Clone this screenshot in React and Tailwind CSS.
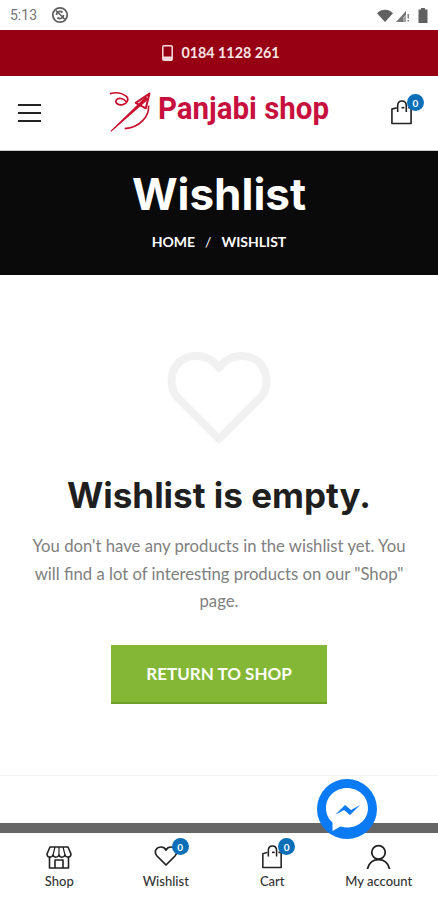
function BagIcon({ className }) {
  return (
    <svg viewBox="0 0 24 26" fill="none" stroke="#222" strokeWidth="1.7" strokeLinejoin="round" className={className}>
      <path d="M7 8.500L2 10v15h20V8.500h-3" />
      <path d="M8 13V6.500C8 3 10 1.500 12.500 1.500S17 3 17 6.500V13" />
      <path d="M12 8.500h3" />
    </svg>
  );
}

function Badge({ className }) {
  return (
    <span className={`absolute flex h-[17px] w-[17px] items-center justify-center rounded-full bg-[#0b6fb8] text-[10px] font-bold leading-none text-white ${className}`}>
      0
    </span>
  );
}

function StatusBar() {
  return (
    <div className="flex h-[30px] items-center justify-between bg-white pl-[10px] pr-[10px]">
      <div className="flex items-center gap-[14px]">
        <span className="font-['Roboto',sans-serif] text-[14px] leading-none text-[#757575]">5:13</span>
        <svg viewBox="0 0 18 18" fill="none" stroke="#616161" className="h-[18px] w-[18px]">
          <circle cx="9" cy="9" r="7.2" strokeWidth="1.8" />
          <path d="M5.500 9a3.500 3.500 0 0 1 6-2.500M12.500 9a3.500 3.500 0 0 1-6 2.500" strokeWidth="1.8" />
          <path d="M5 4.500l9 9" strokeWidth="1.6" />
        </svg>
      </div>
      <div className="flex items-center gap-[3px]">
        <svg viewBox="0 0 16 13" className="h-[13px] w-[16px]">
          <path d="M0 4.200C4.500-.4 11.500-.4 16 4.200L8 13z" fill="#616161" />
        </svg>
        <svg viewBox="0 0 14 14" className="h-[14px] w-[14px]">
          <path d="M0 14L10 3v4l-3 3v4z" fill="#757575" />
          <path d="M7 10.500L10 7.500V14H7z" fill="#9e9e9e" />
          <path d="M11.500 6h1.400v4.500h-1.400zM11.500 12h1.400v1.600h-1.400z" fill="#757575" />
        </svg>
        <svg viewBox="0 0 10 15" className="ml-[5px] h-[15px] w-[10px]">
          <path d="M3 0h4v1.500h2.500V15H.5V1.500H3z" fill="#616161" />
        </svg>
      </div>
    </div>
  );
}

function Logo() {
  return (
    <div className="flex items-center">
      <svg viewBox="0 0 50 46" fill="none" stroke="#c8102e" className="h-[46px] w-[46px]">
        <path d="M1 3C8 1 15 3 19 6c3 3 1 8-4 9-5 1-9-2-7-5 2-3 8-2 11 2" strokeWidth="1.8" />
        <path d="M2 44L40 7l2 2z" fill="#c8102e" strokeWidth="1.2" />
        <path d="M29 13L44 3l-4 16z" strokeWidth="2.200" strokeLinejoin="round" />
        <path d="M43 16c1 12-10 24-26 25" strokeWidth="1.8" />
      </svg>
      <span className="-mt-[7px] ml-[3px] w-[168px] origin-left scale-x-[0.95] whitespace-nowrap font-['Roboto',sans-serif] text-[31px] font-bold leading-none text-[#c8103e]">
        Panjabi shop
      </span>
    </div>
  );
}

function TabItem({ label, children }) {
  return (
    <div className="flex flex-1 flex-col items-center">
      <div className="relative flex h-[30px] items-end justify-center">{children}</div>
      <span className="mt-[3px] font-['Lato',sans-serif] text-[13px] font-medium leading-[18px] text-[#333]">{label}</span>
    </div>
  );
}

export default function App() {
  return (
    <div className="relative flex h-[900px] w-[438px] flex-col overflow-hidden bg-white font-['Lato',sans-serif]">
      <StatusBar />

      <div className="flex h-[46px] items-center justify-center gap-[8px] bg-[#970012] pl-[4px] text-white">
        <svg viewBox="0 0 11 16" className="h-[16px] w-[11px]">
          <path d="M2 .8h7a1.200 1.200 0 0 1 1.200 1.200v12a1.200 1.200 0 0 1-1.200 1.200H2A1.200 1.200 0 0 1 .8 14V2A1.200 1.200 0 0 1 2 .8z" fill="none" stroke="#f4dcdc" strokeWidth="1.500" />
          <path d="M1 11.500h9V15H1z" fill="#f4dcdc" />
        </svg>
        <span className="text-[14.300px] font-bold text-[#f6e4e4]">0184 1128 261</span>
      </div>

      <header className="flex h-[75px] items-center justify-between border-b border-[#ccc] pl-[18px] pr-[25px]">
        <div className="flex w-[23px] flex-col gap-[6px]">
          <span className="h-[2px] bg-[#222]" />
          <span className="h-[2px] bg-[#222]" />
          <span className="h-[2px] bg-[#222]" />
        </div>
        <div className="-mt-[2px] ml-[4px]">
          <Logo />
        </div>
        <div className="relative -mt-[2px]">
          <BagIcon className="h-[26px] w-[23px]" />
          <Badge className="-right-[11px] -top-[5px]" />
        </div>
      </header>

      <section className="flex h-[124px] flex-col items-center bg-[#0a0a0a] text-white">
        <h1 className="mt-[16px] font-['Inter',sans-serif] text-[44px] font-bold leading-[54px]">Wishlist</h1>
        <div className="mt-[11px] flex gap-[10px] text-[14px] font-bold leading-[20px]">
          <span>HOME</span>
          <span className="font-normal">/</span>
          <span>WISHLIST</span>
        </div>
      </section>

      <main className="flex flex-col items-center">
        <svg viewBox="0 0 106 94" fill="none" stroke="#f1f1f1" strokeWidth="8" className="mt-[76px] h-[94px] w-[106px]">
          <path d="M53 88L12 47C-1 33 6 6 29 5c11-.5 19 5 24 12 5-7 13-12.500 24-12 23 1 30 28 17 42z" strokeLinejoin="round" />
        </svg>
        <h2 className="mt-[28px] font-['Inter',sans-serif] text-[35px] font-bold leading-[44px] text-[#1f1f1f]">Wishlist is empty.</h2>
        <p className="mt-[16px] w-[385px] text-center text-[16.700px] leading-[27.500px] text-[#808080]">
          You don't have any products in the wishlist yet. You will find a lot of interesting products on our "Shop" page.
        </p>
        <button className="mt-[29.500px] h-[59px] w-[216px] border-b-2 border-[#6f9f2a] bg-[#83b735] text-[17px] font-bold text-white">
          RETURN TO SHOP
        </button>
      </main>

      <div className="mt-[71px] h-[48px] border-t border-[#f3f3f3]" />
      <div className="h-[10px] bg-[#666]" />

      <nav className="flex flex-1 items-start px-[6px] pt-[6px]">
        <TabItem label="Shop">
          <svg viewBox="0 0 26 24" fill="none" stroke="#222" strokeWidth="1.6" strokeLinejoin="round" className="h-[24px] w-[26px]">
            <path d="M4 2h18l3 7c0 4-5 4-6 1-1 3-5 3-6 0-1 3-5 3-6 0-1 3-6 3-6-1z" />
            <path d="M9 2L7 10M17 2l2 8M13 2v8" strokeWidth="1.200" />
            <path d="M3.500 12v11h19V12M9 23v-8h8v8" />
          </svg>
        </TabItem>
        <TabItem label="Wishlist">
          <svg viewBox="0 0 24 22" fill="none" stroke="#222" strokeWidth="1.7" strokeLinejoin="round" className="mb-[2px] h-[22px] w-[24px]">
            <path d="M12 20L3 11C-1 6 3 2 7 2c2.500 0 4 1 5 3 1-2 2.500-3 5-3 4 0 8 4 4 9z" />
          </svg>
          <Badge className="-right-[11px] top-[-1px]" />
        </TabItem>
        <TabItem label="Cart">
          <BagIcon className="h-[25px] w-[22px]" />
          <Badge className="-right-[12px] top-[-1px]" />
        </TabItem>
        <TabItem label="My account">
          <svg viewBox="0 0 24 24" fill="none" stroke="#222" strokeWidth="1.7" strokeLinecap="round" className="h-[25px] w-[25px]">
            <circle cx="12" cy="8" r="6.500" />
            <path d="M1.500 23.500C3 18 7 15 12 15s9 3 10.500 8.500" />
          </svg>
        </TabItem>
      </nav>

      <div className="absolute left-[317px] top-[779px] h-[60px] w-[60px]">
        <svg viewBox="0 0 60 60" className="h-[60px] w-[60px]">
          <circle cx="30" cy="30" r="30" fill="#0b7bf5" />
          <path d="M30 9C18 9 9 18 9 29c0 6 2.500 11 6.500 14.500V52l8-4.500c2 .6 4.300 1 6.500 1 12 0 21-8.500 21-19.500S42 9 30 9z" fill="#fff" />
          <path d="M18 36l10-10 6 5 9-5-10 10-6-5z" fill="#0b7bf5" />
        </svg>
      </div>
    </div>
  );
}
